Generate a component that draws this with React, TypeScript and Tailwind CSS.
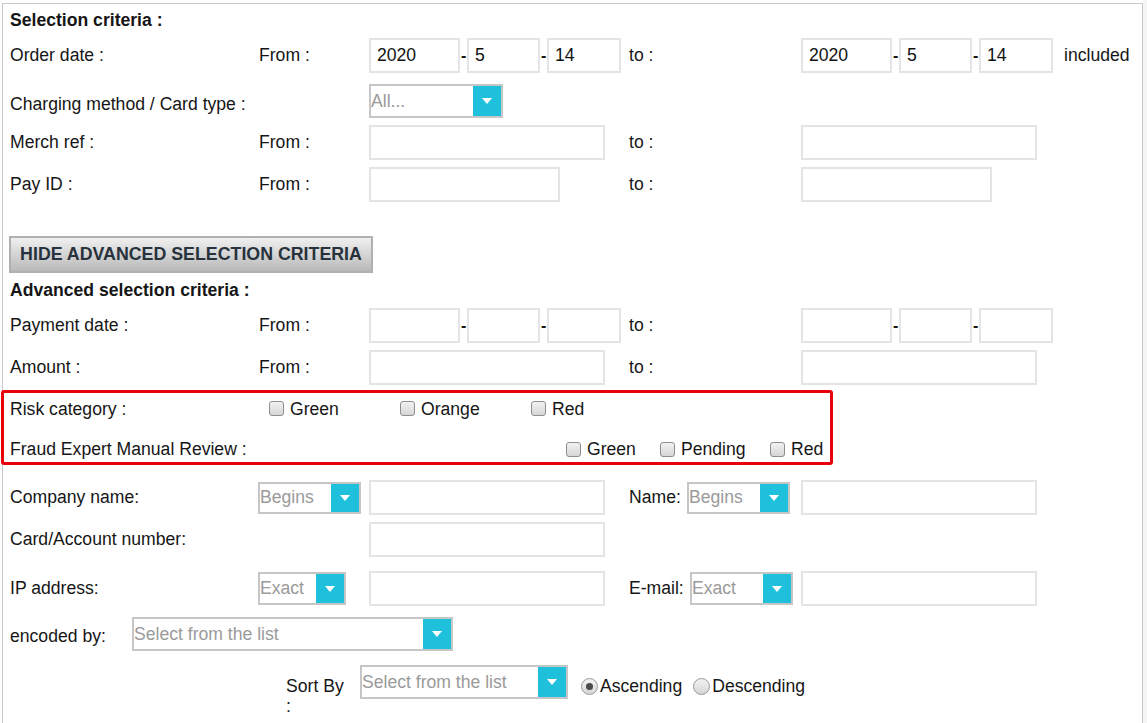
import React from 'react';

const Caret: React.FC = () => (
  <svg width="10" height="6" viewBox="0 0 10 6" className="block">
    <path d="M0 0 L10 0 L5 6 Z" fill="#ffffff" />
  </svg>
);

const TextBox: React.FC<{ w: string; value?: string }> = ({ w, value }) => (
  <div className={`${w} h-[35px] shrink-0 border-2 border-[#e4e4e4] bg-white flex items-center pl-[6px] text-[#111]`}>
    {value}
  </div>
);

const Dropdown: React.FC<{ w: string; h?: string; text: string }> = ({ w, h = 'h-[34px]', text }) => (
  <div className={`${w} ${h} shrink-0 border-2 border-[#c6c6c6] bg-white flex`}>
    <span className="flex-1 flex items-center text-[#9a9a9a] whitespace-nowrap overflow-hidden">{text}</span>
    <span className="w-[28px] bg-[#1ec0dc] flex items-center justify-center">
      <Caret />
    </span>
  </div>
);

const Dash: React.FC = () => <span className="w-[7px] shrink-0 text-left pl-[1px] font-bold text-[16px]">-</span>;

const DateGroup: React.FC<{ y?: string; m?: string; d?: string }> = ({ y, m, d }) => (
  <div className="flex items-center shrink-0">
    <TextBox w="w-[91px]" value={y} />
    <Dash />
    <TextBox w="w-[73px]" value={m} />
    <Dash />
    <TextBox w="w-[74px]" value={d} />
  </div>
);

const Check: React.FC<{ label: string; w: string }> = ({ label, w }) => (
  <div className={`${w} flex items-center shrink-0`}>
    <span className="w-[15px] h-[15px] rounded-[3px] border border-[#8e8e8e] bg-gradient-to-b from-[#f2f2f2] to-[#d6d6d6] shrink-0" />
    <span className="ml-[6px]">{label}</span>
  </div>
);

const Radio: React.FC<{ label: string; checked?: boolean }> = ({ label, checked }) => (
  <div className="flex items-center shrink-0">
    <span className="w-[17px] h-[17px] rounded-full border border-[#9a9a9a] bg-gradient-to-b from-[#f2f2f2] to-[#d6d6d6] flex items-center justify-center shrink-0">
      {checked && <span className="w-[7px] h-[7px] rounded-full bg-[#4a4a4a]" />}
    </span>
    <span className="ml-[2px]">{label}</span>
  </div>
);

const Label: React.FC<{ w: string; children: React.ReactNode }> = ({ w, children }) => (
  <span className={`${w} shrink-0 whitespace-nowrap`}>{children}</span>
);

const App: React.FC = () => {
  return (
    <div className="h-screen w-full overflow-hidden bg-white flex font-['Liberation_Sans',Arial,sans-serif] text-[17.6px] text-[#161616]">
      <div className="w-[1141px] shrink-0 ml-[2px] mt-[3px] h-[760px] border border-[#c8c8c8] bg-white pl-[7px] flex flex-col">
        {/* Selection criteria */}
        <div className="h-[32px] flex items-center font-bold">Selection criteria :</div>

        <div className="mt-[2px] h-[35px] flex items-center">
          <Label w="w-[249px]">Order date :</Label>
          <Label w="w-[110px]">From :</Label>
          <DateGroup y="2020" m="5" d="14" />
          <span className="ml-[8px] w-[172px] shrink-0">to :</span>
          <DateGroup y="2020" m="5" d="14" />
          <span className="ml-[11px]">included</span>
        </div>

        <div className="mt-[11px] h-[34px] flex items-center">
          <span className="w-[359px] shrink-0 whitespace-nowrap pt-[7px]">Charging method / Card type :</span>
          <Dropdown w="w-[134px]" text="All..." />
        </div>

        <div className="mt-[7px] h-[35px] flex items-center">
          <Label w="w-[249px]">Merch ref :</Label>
          <Label w="w-[110px]">From :</Label>
          <TextBox w="w-[236px]" />
          <span className="ml-[24px] w-[172px] shrink-0">to :</span>
          <TextBox w="w-[236px]" />
        </div>

        <div className="mt-[7px] h-[35px] flex items-center">
          <Label w="w-[249px]">Pay ID :</Label>
          <Label w="w-[110px]">From :</Label>
          <TextBox w="w-[191px]" />
          <span className="ml-[69px] w-[172px] shrink-0">to :</span>
          <TextBox w="w-[191px]" />
        </div>

        <div className="mt-[34px] h-[37px] flex">
          <button className="-ml-[1px] w-[364px] h-[37px] border-2 border-[#b0b0b0] bg-gradient-to-b from-[#f0f0f0] to-[#b9b9b9] text-[17.8px] font-bold text-[#28323c] flex items-center justify-center whitespace-nowrap">
            HIDE ADVANCED SELECTION CRITERIA
          </button>
        </div>

        {/* Advanced selection criteria */}
        <div className="h-[35px] flex items-center font-bold">Advanced selection criteria :</div>

        <div className="h-[35px] flex items-center">
          <Label w="w-[249px]">Payment date :</Label>
          <Label w="w-[110px]">From :</Label>
          <DateGroup />
          <span className="ml-[8px] w-[172px] shrink-0">to :</span>
          <DateGroup />
        </div>

        <div className="mt-[7px] h-[35px] flex items-center">
          <Label w="w-[249px]">Amount :</Label>
          <Label w="w-[110px]">From :</Label>
          <TextBox w="w-[236px]" />
          <span className="ml-[24px] w-[172px] shrink-0">to :</span>
          <TextBox w="w-[236px]" />
        </div>

        <div className="mt-[5px] -ml-[9px] w-[832px] h-[75px] border-[3px] border-[#e8000b] rounded-[3px] pl-[6px] flex flex-col">
          <div className="h-[32px] flex items-center">
            <Label w="w-[259px]">Risk category :</Label>
            <Check label="Green" w="w-[131px]" />
            <Check label="Orange" w="w-[131px]" />
            <Check label="Red" w="w-[100px]" />
          </div>
          <div className="h-[37px] pt-[11px] flex items-center">
            <Label w="w-[556px]">Fraud Expert Manual Review :</Label>
            <Check label="Green" w="w-[94px]" />
            <Check label="Pending" w="w-[110px]" />
            <Check label="Red" w="w-[60px]" />
          </div>
        </div>

        <div className="mt-[15px] h-[35px] flex items-center">
          <Label w="w-[248px]">Company name:</Label>
          <Dropdown w="w-[103px]" h="h-[32px]" text="Begins" />
          <span className="ml-[8px]"><TextBox w="w-[236px]" /></span>
          <span className="ml-[24px] w-[58px] shrink-0">Name:</span>
          <Dropdown w="w-[103px]" h="h-[32px]" text="Begins" />
          <span className="ml-[11px]"><TextBox w="w-[236px]" /></span>
        </div>

        <div className="mt-[7px] h-[35px] flex items-center">
          <Label w="w-[359px]">Card/Account number:</Label>
          <TextBox w="w-[236px]" />
        </div>

        <div className="mt-[14px] h-[35px] flex items-center">
          <Label w="w-[248px]">IP address:</Label>
          <Dropdown w="w-[88px]" h="h-[33px]" text="Exact" />
          <span className="ml-[23px]"><TextBox w="w-[236px]" /></span>
          <span className="ml-[24px] w-[61px] shrink-0">E-mail:</span>
          <Dropdown w="w-[103px]" h="h-[33px]" text="Exact" />
          <span className="ml-[8px]"><TextBox w="w-[236px]" /></span>
        </div>

        <div className="mt-[11px] h-[34px] flex items-center">
          <span className="w-[122px] shrink-0 whitespace-nowrap pt-[5px]">encoded by:</span>
          <Dropdown w="w-[321px]" text="Select from the list" />
        </div>

        <div className="mt-[14px] h-[34px] flex items-center pl-[276px]">
          <span className="w-[74px] shrink-0 self-start pt-[11px] leading-[20px]">
            Sort By<br />:
          </span>
          <Dropdown w="w-[208px]" text="Select from the list" />
          <span className="ml-[13px] pt-[8px] flex items-center">
            <Radio label="Ascending" checked />
            <span className="ml-[11px]"><Radio label="Descending" /></span>
          </span>
        </div>
      </div>
      <div className="flex-1 bg-[#f5f5f5]" />
    </div>
  );
};

export default App;
